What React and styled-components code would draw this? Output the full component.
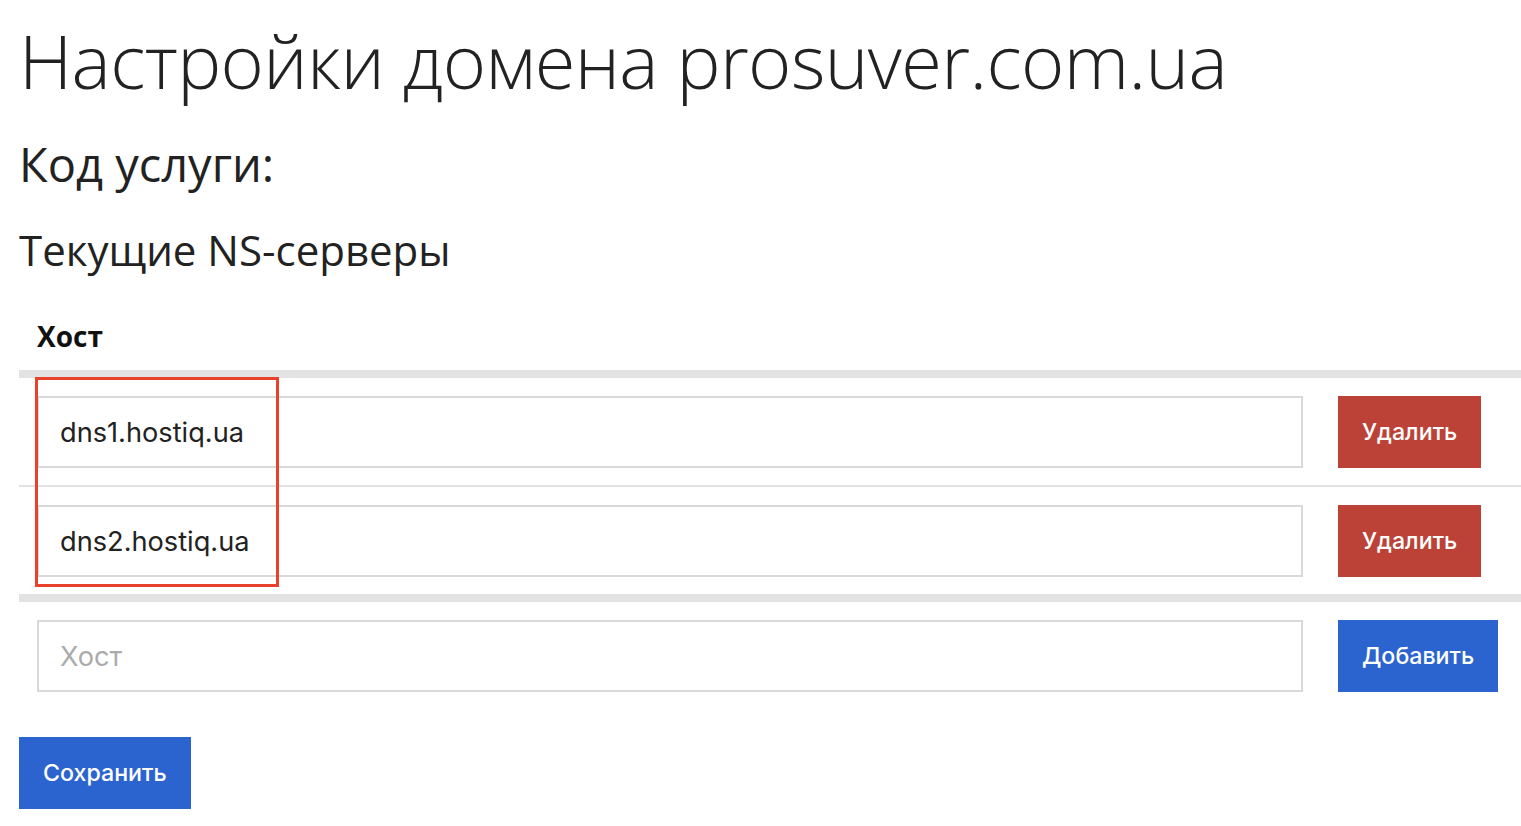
import React from "react";
import styled, { createGlobalStyle } from "styled-components";

const Global = createGlobalStyle`
  html, body { margin: 0; padding: 0; background: #fff; overflow: hidden; }
  body { font-family: "Open Sans", "Noto Sans", sans-serif; color: #222; }
`;

const Page = styled.div`
  padding: 17px 0 0 19px;
  position: relative;
`;

const Title = styled.h1`
  margin: 0;
  font-family: "Open Sans", sans-serif;
  font-weight: 300;
  font-size: 74px;
  line-height: 88px;
  color: #222;
  letter-spacing: -0.62px;
`;

const Subtitle = styled.h2`
  margin: ${(p) => p.$mt}px 0 0;
  font-family: "Open Sans", sans-serif;
  font-weight: 400;
  font-size: ${(p) => p.$size}px;
  line-height: 1.2;
  color: #222;
`;

const Table = styled.div`
  margin-top: 44px;
  display: flex;
  flex-direction: column;
`;

const HeadCell = styled.div`
  font-family: "Open Sans", sans-serif;
  font-weight: 700;
  font-size: 28px;
  line-height: 1.2;
  padding: 0 0 17px 18px;
  color: #111;
`;

const Row = styled.div`
  display: flex;
  align-items: center;
  padding: 18px 0 17px 18px;
  border-top: ${(p) => (p.$thick ? "8px solid #e3e3e3" : "2px solid #e3e3e3")};
`;

const Input = styled.input`
  box-sizing: border-box;
  width: 1266px;
  height: 72px;
  border: 2px solid #d9d9d9;
  padding: 0 21px;
  margin: 0 35px 0 0;
  font-family: "Inter", "Liberation Sans", sans-serif;
  font-size: 27.2px;
  color: #222;
  background: #fff;
  outline: none;
  &::placeholder { color: #ababab; }
`;

const Button = styled.button`
  box-sizing: border-box;
  height: 72px;
  border: none;
  padding: 0 24px;
  font-family: "Inter", "Liberation Sans", sans-serif;
  font-weight: 500;
  font-size: 23.2px;
  color: #fff;
  background: ${(p) => (p.$variant === "danger" ? "#bc4237" : "#2c64cf")};
  cursor: pointer;
`;

const SaveWrap = styled.div`
  margin-top: 28px;
`;

const Highlight = styled.div`
  position: absolute;
  left: 35px;
  top: 377px;
  width: 244px;
  height: 210px;
  box-sizing: border-box;
  border: 3px solid #e8412c;
  pointer-events: none;
`;

export default function App() {
  const hosts = ["dns1.hostiq.ua", "dns2.hostiq.ua"];
  return (
    <>
      <Global />
      <Page>
        <Title>Настройки домена prosuver.com.ua</Title>
        <Subtitle $size={47} $mt={31}>Код услуги:</Subtitle>
        <Subtitle $size={42} $mt={33}>Текущие NS-серверы</Subtitle>
        <Table>
          <HeadCell>Хост</HeadCell>
          {hosts.map((h, i) => (
            <Row key={h} $thick={i === 0}>
              <Input defaultValue={h} />
              <Button $variant="danger">Удалить</Button>
            </Row>
          ))}
          <Row $thick>
            <Input placeholder="Хост" />
            <Button>Добавить</Button>
          </Row>
        </Table>
        <SaveWrap>
          <Button>Сохранить</Button>
        </SaveWrap>
        <Highlight />
      </Page>
    </>
  );
}
